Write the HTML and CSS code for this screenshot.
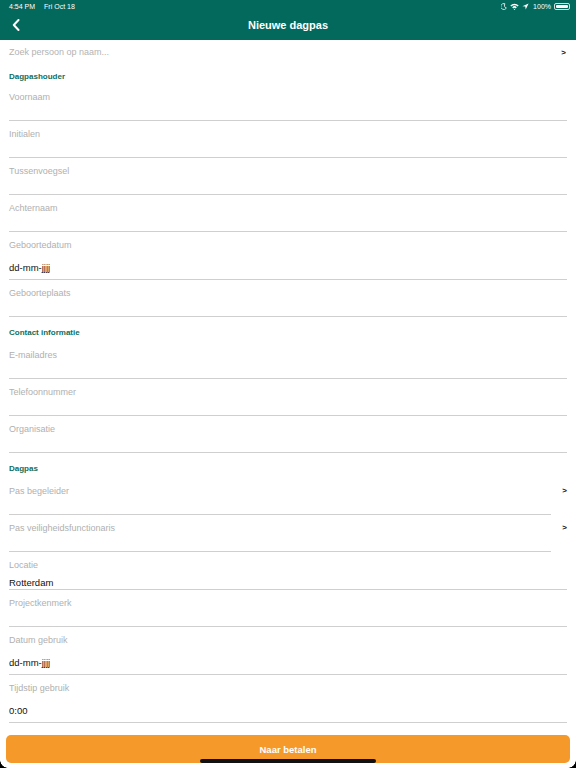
FILE: index.html
```html
<!DOCTYPE html>
<html lang="nl">
<head>
<meta charset="utf-8">
<title>Nieuwe dagpas</title>
<link rel="stylesheet" href="styles.css">
</head>
<body>
<div class="screen">
  <header class="header">
    <div class="status">
      <div class="status-left"><span>4:54 PM</span><span>Fri Oct 18</span></div>
      <div class="status-right">
        <svg class="moon" width="6" height="7" viewBox="0 0 6 7"><path d="M4 0.8 A3 3 0 1 0 5.4 5 A2.6 2.6 0 0 1 4 0.8Z" fill="none" stroke="#fff" stroke-width="0.8"/></svg>
        <svg width="9" height="7" viewBox="0 0 9 7"><path d="M0.3 2.4 A6 6 0 0 1 8.7 2.4 L7.6 3.5 A4.4 4.4 0 0 0 1.4 3.5Z M2.2 4.3 A3.2 3.2 0 0 1 6.8 4.3 L5.7 5.4 A1.7 1.7 0 0 0 3.3 5.4Z M4.5 7 L3.7 6.2 A1.1 1.1 0 0 1 5.3 6.2Z" fill="#fff"/></svg>
        <svg width="7" height="7" viewBox="0 0 7 7"><path d="M6.6 0.4 L0.4 3.2 L3.3 3.6 L3.7 6.6Z" fill="#fff"/></svg>
        <span class="pct">100%</span>
        <span class="battery"><span class="battery-fill"></span></span>
      </div>
    </div>
    <div class="nav">
      <svg class="back" width="8" height="12" viewBox="0 0 8 12"><path d="M6.5 1 L1.8 6 L6.5 11" fill="none" stroke="#fff" stroke-width="2" stroke-linecap="round" stroke-linejoin="round"/></svg>
      <h1 class="title">Nieuwe dagpas</h1>
    </div>
  </header>

  <div class="search">
    <span class="placeholder">Zoek persoon op naam...</span>
    <span class="chev">&gt;</span>
  </div>

  <main class="form">
    <h2 class="section first">Dagpashouder</h2>
    <div class="field"><div class="label">Voornaam</div><div class="empty"></div></div>
    <div class="field"><div class="label">Initialen</div><div class="empty"></div></div>
    <div class="field"><div class="label">Tussenvoegsel</div><div class="empty"></div></div>
    <div class="field"><div class="label">Achternaam</div><div class="empty"></div></div>
    <div class="field"><div class="label">Geboortedatum</div><div class="value">dd-mm-jjjj</div></div>
    <div class="field"><div class="label">Geboorteplaats</div><div class="empty"></div></div>

    <h2 class="section">Contact informatie</h2>
    <div class="field"><div class="label">E-mailadres</div><div class="empty"></div></div>
    <div class="field"><div class="label">Telefoonnummer</div><div class="empty"></div></div>
    <div class="field"><div class="label">Organisatie</div><div class="empty"></div></div>

    <h2 class="section">Dagpas</h2>
    <div class="pick-row">
      <div class="field"><div class="label">Pas begeleider</div><div class="empty"></div></div>
      <span class="chev pick-chev">&gt;</span>
    </div>
    <div class="pick-row">
      <div class="field"><div class="label">Pas veiligheidsfunctionaris</div><div class="empty"></div></div>
      <span class="chev pick-chev">&gt;</span>
    </div>
    <div class="field"><div class="label">Locatie</div><div class="value tight">Rotterdam</div></div>
    <div class="field"><div class="label">Projectkenmerk</div><div class="empty"></div></div>
    <div class="field"><div class="label">Datum gebruik</div><div class="value">dd-mm-jjjj</div></div>
    <div class="field"><div class="label">Tijdstip gebruik</div><div class="value">0:00</div></div>
  </main>

  <div class="footer">
    <button class="pay">Naar betalen</button>
  </div>

  <div class="home-indicator"></div>
  <div class="corner corner-bl"></div>
  <div class="corner corner-br"></div>
</div>
</body>
</html>
```

FILE: styles.css
```css
* { box-sizing: border-box; }

html, body {
  margin: 0;
  padding: 0;
  background: #fff;
}

body {
  font-family: "Liberation Sans", Arial, sans-serif;
  color: #111;
}

.screen {
  position: relative;
  width: 576px;
  height: 768px;
  overflow: hidden;
  background: #fff;
}

/* Header */
.header {
  background: #03695d;
  height: 40px;
  display: flex;
  flex-direction: column;
}

.status {
  height: 12px;
  display: flex;
  justify-content: space-between;
  align-items: center;
  padding: 0 6px 0 9px;
  color: #fff;
  font-size: 7px;
}

.status-left {
  display: flex;
  gap: 9px;
  padding-top: 1px;
}

.status-right {
  display: flex;
  align-items: center;
  gap: 3px;
  padding-top: 1px;
}

.pct { font-size: 7px; margin-left: 1px; }

.battery {
  width: 16px;
  height: 7px;
  border: 0.8px solid rgba(255,255,255,0.8);
  border-radius: 2px;
  padding: 1px;
  display: flex;
}

.battery-fill {
  flex: 1;
  background: #fff;
  border-radius: 1px;
}

.nav {
  position: relative;
  height: 26px;
  display: flex;
  align-items: center;
  justify-content: center;
}

.back {
  position: absolute;
  left: 12px;
  top: 7px;
}

.title {
  margin: 0;
  font-size: 11px;
  font-weight: bold;
  color: #fff;
  line-height: 14px;
}

/* Search */
.search {
  height: 20px;
  display: flex;
  align-items: center;
  justify-content: space-between;
  padding: 4px 10px 0 9px;
}

.placeholder {
  font-size: 9px;
  color: #b3b3b3;
}

.chev {
  font-size: 8px;
  font-weight: bold;
  color: #111;
}

/* Form */
.form {
  padding: 0 9px;
}

.section {
  margin: 0;
  padding: 11px 0 4px;
  font-size: 8px;
  line-height: 10px;
  font-weight: bold;
  color: #0d6f60;
}

.section.first {
  padding: 12px 0 2px;
}

.field {
  padding-top: 8px;
  border-bottom: 1px solid #cfcfcf;
}

.label {
  font-size: 9px;
  line-height: 11px;
  color: #b0b0b0;
}

.empty {
  height: 17px;
}

.value {
  margin-top: 11px;
  padding-bottom: 5px;
  font-size: 9.5px;
  line-height: 12px;
  color: #111;
}

.value.tight {
  margin-top: 6px;
  padding-bottom: 0;
}

.pick-row {
  display: flex;
  align-items: flex-start;
}

.pick-row .field {
  flex: 1;
}

.pick-chev {
  width: 16px;
  text-align: right;
  padding-top: 8px;
}

/* Footer */
.footer {
  padding: 12px 6px 0;
}

.pay {
  display: block;
  width: 100%;
  height: 28px;
  border: none;
  border-radius: 5px;
  background: #f6992b;
  color: #fff;
  font-family: "Liberation Sans", Arial, sans-serif;
  font-size: 9.5px;
  font-weight: bold;
  padding: 0;
}

.home-indicator {
  position: absolute;
  left: 200px;
  top: 759px;
  width: 176px;
  height: 4px;
  border-radius: 2px;
  background: #111;
}

.corner {
  position: absolute;
  bottom: 0;
  width: 8px;
  height: 8px;
}

.corner-bl {
  left: 0;
  background: radial-gradient(circle at 8px 0, transparent 7.5px, #000 8px);
}

.corner-br {
  right: 0;
  background: radial-gradient(circle at 0 0, transparent 7.5px, #000 8px);
}
```
